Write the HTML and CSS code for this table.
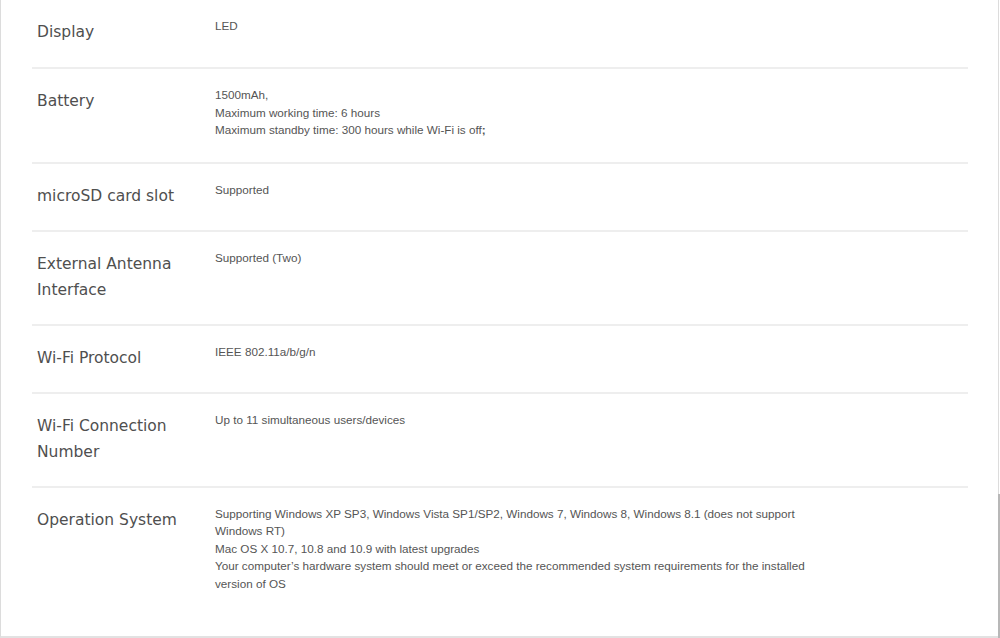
FILE: index.html
```html
<!DOCTYPE html>
<html lang="en">
  <head>
    <meta charset="UTF-8" />
    <meta name="viewport" content="width=device-width, initial-scale=1.0" />
    <title>Specifications</title>
    <link rel="stylesheet" href="styles.css">
  </head>
  <body>
    <div class="specs">
      <div class="row first">
        <div class="label">Display</div>
        <div class="value">LED</div>
      </div>
      <div class="row">
        <div class="label">Battery</div>
        <div class="value">
          1500mAh,<br>
          Maximum working time: 6 hours<br>
          Maximum standby time: 300 hours while Wi-Fi is off<span class="semi">;</span>
        </div>
      </div>
      <div class="row">
        <div class="label">microSD card slot</div>
        <div class="value">Supported</div>
      </div>
      <div class="row">
        <div class="label">External Antenna Interface</div>
        <div class="value">Supported (Two)</div>
      </div>
      <div class="row">
        <div class="label">Wi-Fi Protocol</div>
        <div class="value">IEEE 802.11a/b/g/n</div>
      </div>
      <div class="row">
        <div class="label">Wi-Fi Connection Number</div>
        <div class="value">Up to 11 simultaneous users/devices</div>
      </div>
      <div class="row last">
        <div class="label">Operation System</div>
        <div class="value">
          Supporting Windows XP SP3, Windows Vista SP1/SP2, Windows 7, Windows 8, Windows 8.1 (does not support Windows RT)<br>
          Mac OS X 10.7, 10.8 and 10.9 with latest upgrades<br>
          Your computer’s hardware system should meet or exceed the recommended system requirements for the installed version of OS
        </div>
      </div>
    </div>
    <div class="scroll"></div>
  </body>
</html>
```

FILE: styles.css
```css
* {
  margin: 0;
  padding: 0;
  box-sizing: border-box;
}

body {
  background-color: #fff;
  height: 638px;
  overflow: hidden;
}

.specs {
  width: 999px;
  height: 638px;
  border-left: 1px solid #dcdcdc;
  border-right: 1px solid #dcdcdc;
  border-bottom: 2px solid #e2e2e2;
  padding: 0 30px 0 31px;
}

.row {
  display: flex;
  border-top: 2px solid #eeeeee;
  padding: 17px 0 21px 5px;
}

.row.first {
  border-top: none;
  height: 67px;
}

.label {
  width: 178px;
  flex-shrink: 0;
  font-family: "DejaVu Sans", Tahoma, sans-serif;
  font-size: 15.5px;
  line-height: 26px;
  color: #4f4f4f;
  padding-top: 2px;
  padding-right: 24px;
}

.value {
  width: 600px;
  padding-bottom: 2px;
  font-family: "Liberation Sans", Arial, sans-serif;
  font-size: 11.7px;
  line-height: 17.5px;
  color: #555;
}

.semi {
  font-weight: bold;
}

.scroll {
  position: absolute;
  left: 998px;
  top: 494px;
  width: 2px;
  height: 144px;
  background-color: #b8b8b8;
}
```
